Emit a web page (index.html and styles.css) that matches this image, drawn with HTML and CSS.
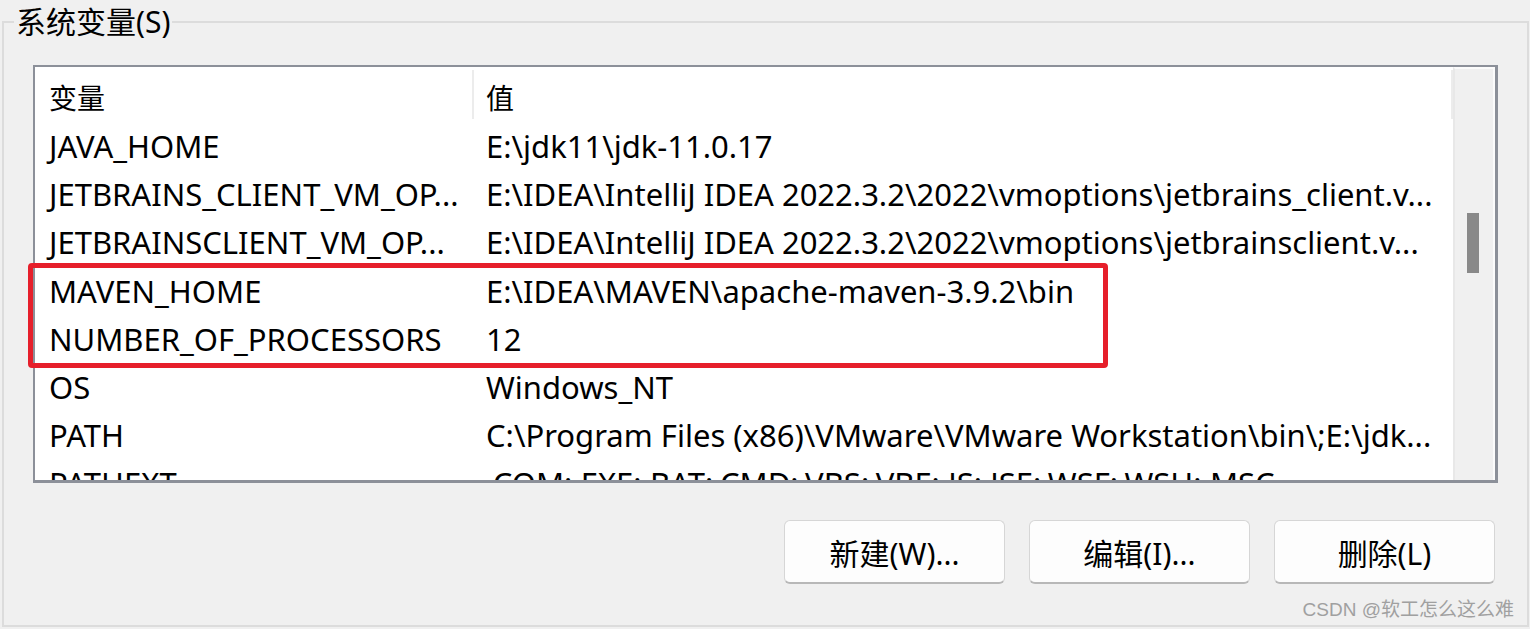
FILE: index.html
```html
<!DOCTYPE html>
<html lang="zh-CN">
<head>
<meta charset="utf-8">
<title>系统变量</title>
<link rel="stylesheet" href="styles.css">
</head>
<body>
<fieldset class="group">
  <legend class="group-title">系统变量(S)</legend>
  <div class="list-wrap">
    <div class="listbox">
      <div class="list-main">
        <div class="row header">
          <div class="cell name">变量</div>
          <div class="cell value">值</div>
        </div>
        <div class="row"><div class="cell name">JAVA_HOME</div><div class="cell value">E:\jdk11\jdk-11.0.17</div></div>
        <div class="row"><div class="cell name">JETBRAINS_CLIENT_VM_OP...</div><div class="cell value">E:\IDEA\IntelliJ IDEA 2022.3.2\2022\vmoptions\jetbrains_client.v...</div></div>
        <div class="row"><div class="cell name">JETBRAINSCLIENT_VM_OP...</div><div class="cell value">E:\IDEA\IntelliJ IDEA 2022.3.2\2022\vmoptions\jetbrainsclient.v...</div></div>
        <div class="row"><div class="cell name">MAVEN_HOME</div><div class="cell value">E:\IDEA\MAVEN\apache-maven-3.9.2\bin</div></div>
        <div class="row"><div class="cell name">NUMBER_OF_PROCESSORS</div><div class="cell value">12</div></div>
        <div class="row"><div class="cell name">OS</div><div class="cell value">Windows_NT</div></div>
        <div class="row"><div class="cell name">PATH</div><div class="cell value">C:\Program Files (x86)\VMware\VMware Workstation\bin\;E:\jdk...</div></div>
        <div class="row"><div class="cell name">PATHEXT</div><div class="cell value">.COM;.EXE;.BAT;.CMD;.VBS;.VBE;.JS;.JSE;.WSF;.WSH;.MSC</div></div>
      </div>
      <div class="scrollbar"><div class="thumb"></div></div>
    </div>
    <div class="highlight"></div>
  </div>
  <div class="buttons">
    <button class="btn">新建(W)...</button>
    <button class="btn">编辑(I)...</button>
    <button class="btn">删除(L)</button>
  </div>
  <div class="watermark">CSDN @软工怎么这么难</div>
</fieldset>
</body>
</html>
```

FILE: styles.css
```css
html, body {
  margin: 0;
  padding: 0;
  background: #f0f0f0;
  width: 1530px;
  height: 629px;
  overflow: hidden;
  font-family: "Noto Sans", "Noto Sans CJK SC", sans-serif;
  color: #000;
}

.group {
  position: relative;
  margin: 6px 0 0 2px;
  width: 1527px;
  height: 621px;
  box-sizing: border-box;
  border: 2px solid #dcdcdc;
  padding: 0;
  min-width: 0;
}

.group-title {
  font-size: 30px;
  line-height: 32px;
  padding: 0 2px;
  margin-left: 10px;
  color: #000;
}

.list-wrap {
  position: relative;
  margin: 27px 0 0 29px;
  width: 1465px;
}

.listbox {
  width: 1465px;
  height: 418px;
  box-sizing: border-box;
  border: 2px solid #8c9099;
  border-right-width: 3px;
  border-bottom-width: 3px;
  background: #fff;
  display: flex;
  overflow: hidden;
}

.list-main {
  flex: 1;
  overflow: hidden;
}

.row {
  display: flex;
  height: 48.2px;
  align-items: center;
  font-size: 31px;
  white-space: nowrap;
}

.row.header {
  height: 55px;
  align-items: stretch;
}

.cell {
  overflow: hidden;
  white-space: nowrap;
}

.cell.name {
  width: 437px;
  box-sizing: border-box;
  padding-left: 14px;
  flex: none;
}

.cell.value {
  flex: 1;
  padding-left: 12px;
}

.row:not(.header) .cell.value {
  padding-left: 14px;
}

.header .cell {
  font-size: 28px;
  display: flex;
  align-items: center;
  padding-top: 4px;
  margin: 3px 0 3px 0;
}

.header .cell.value {
  border-left: 2px solid #ececec;
  border-right: 2px solid #ececec;
}

.scrollbar {
  flex: none;
  width: 42px;
  box-sizing: border-box;
  background: #f0f0f0;
  border-left: 2px solid #e8e8e8;
  border-right: 2px solid #fbfbfb;
  border-top: 2px solid #fbfbfb;
  position: relative;
}

.thumb {
  position: absolute;
  left: 12px;
  top: 144px;
  width: 12px;
  height: 60px;
  background: #898989;
}

.highlight {
  position: absolute;
  left: -5px;
  top: 198px;
  width: 1080px;
  height: 105px;
  box-sizing: border-box;
  border: 5px solid #e61f2b;
  border-radius: 4px;
}

.buttons {
  display: flex;
  justify-content: flex-end;
  gap: 24px;
  margin: 37px 32px 0 0;
}

.btn {
  width: 221px;
  height: 64px;
  box-sizing: border-box;
  background: #fdfdfd;
  border: 1px solid #d6d6d6;
  border-bottom: 2px solid #b8b8b8;
  border-radius: 6px;
  font-family: "Noto Sans", "Noto Sans CJK SC", sans-serif;
  font-size: 30px;
  color: #000;
  padding: 0;
}

.watermark {
  position: absolute;
  right: 13px;
  bottom: 4px;
  font-family: "Liberation Sans", "Noto Sans CJK SC", sans-serif;
  font-size: 19px;
  color: #a0a0a0;
}
```
